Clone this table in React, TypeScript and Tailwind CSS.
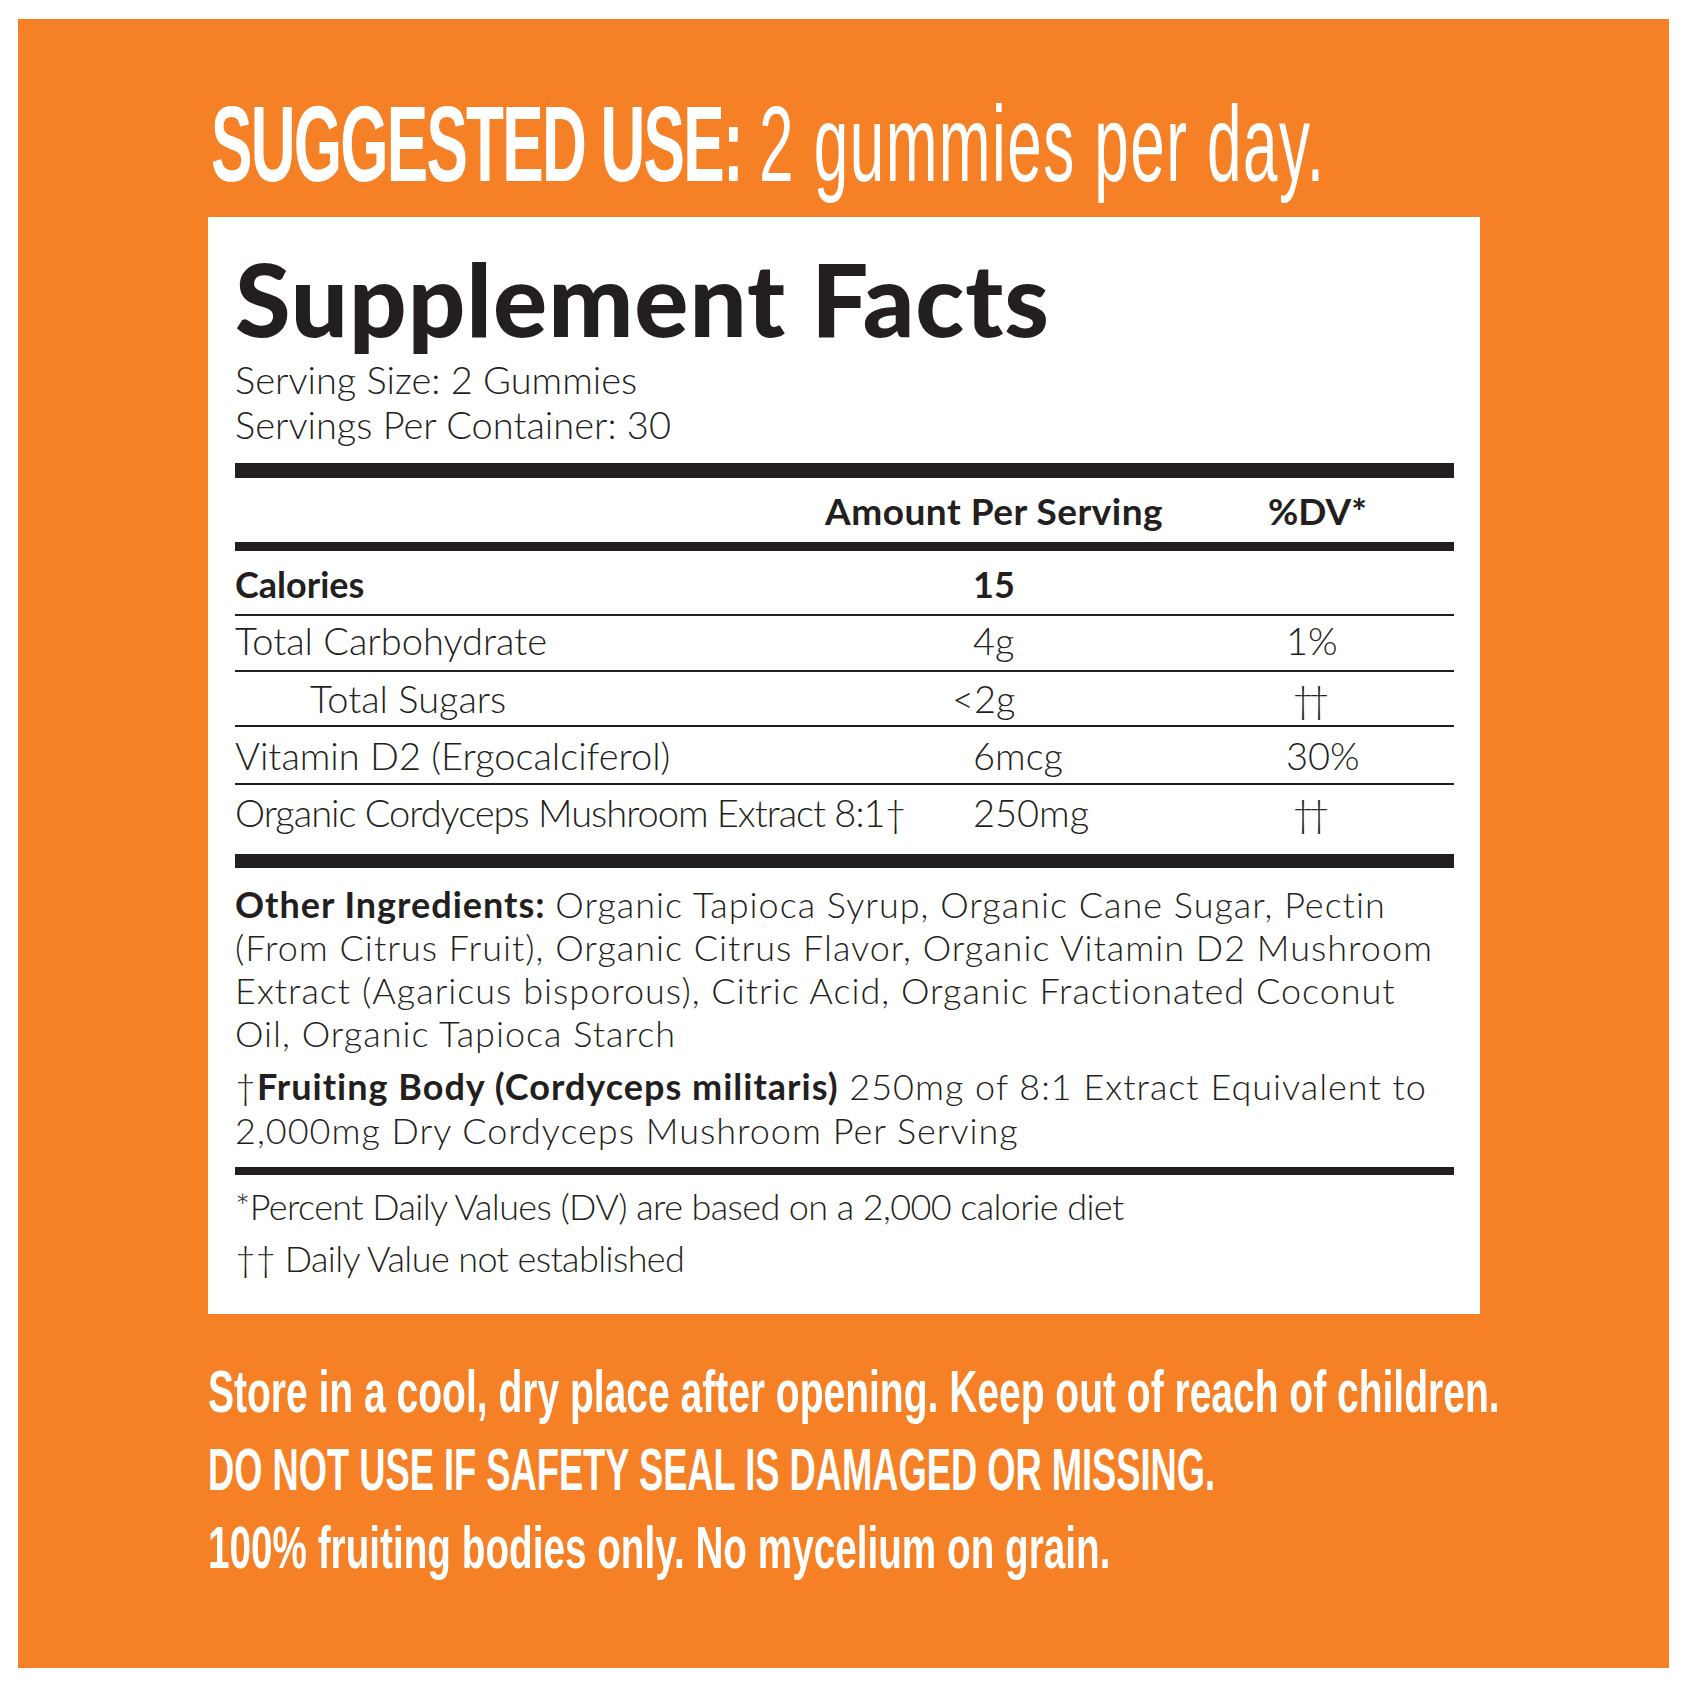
import React from 'react'

const ROWS = [
  { label: 'Total Carbohydrate', amount: '4g', dv: '1%', box: 'h-[54px] pt-[5px]', indent: false, shift: false, daggers: false, tight: false },
  { label: 'Total Sugars', amount: '<2g', dv: '††', box: 'h-[53px] pt-[7px]', indent: true, shift: true, daggers: true, tight: false },
  { label: 'Vitamin D2 (Ergocalciferol)', amount: '6mcg', dv: '30%', box: 'h-[56px] pt-[9px]', indent: false, shift: false, daggers: false, tight: false },
  { label: 'Organic Cordyceps Mushroom Extract 8:1†', amount: '250mg', dv: '††', box: 'h-[69px] pt-[8px]', indent: false, shift: false, daggers: true, tight: true },
]

const INGREDIENT_LINES = [
  'Organic Tapioca Syrup, Organic Cane Sugar, Pectin',
  '(From Citrus Fruit), Organic Citrus Flavor, Organic Vitamin D2 Mushroom',
  'Extract (Agaricus bisporous), Citric Acid, Organic Fractionated Coconut',
  'Oil, Organic Tapioca Starch',
]

function FactRow({ row, last }: { row: (typeof ROWS)[number]; last: boolean }) {
  return (
    <>
      <div className={`flex whitespace-nowrap text-[38px] leading-[38px] font-light ${row.box}`}>
        <div className={`w-[738px] ${row.indent ? 'pl-[75px]' : ''} ${row.tight ? 'tracking-[-1px]' : ''}`}>{row.label}</div>
        <div className="w-[313px]">
          <span className={row.shift ? '-ml-[21px]' : ''}>{row.amount}</span>
        </div>
        <div className={row.daggers ? 'pl-[6px] tracking-[-6px]' : ''}>{row.dv}</div>
      </div>
      {!last && <div className="h-[2px] bg-[#231f20]" />}
    </>
  )
}

export default function App() {
  return (
    <div className="w-[1688px] h-[1688px] bg-white overflow-hidden pt-[19px] pl-[18px]">
      <div className="w-[1651px] h-[1649px] bg-[#f58026] pt-[72px] pl-[190px] overflow-hidden">
        {/* headline */}
        <div className="ml-[3px] h-[107px] text-[107px] leading-[107px] text-white whitespace-nowrap origin-left scale-x-[0.58] font-['Liberation_Sans',Arial,sans-serif]">
          <span className="font-bold tracking-[-3px]">SUGGESTED USE:</span>{' '}
          <span className="tracking-[2.5px]">2 gummies per day.</span>
        </div>

        {/* facts panel */}
        <div className="mt-[19px] w-[1272px] h-[1097px] bg-white pt-[30px] pl-[27px] pr-[26px] text-[#231f20] font-['Lato',sans-serif]">
          <div className="h-[102px] text-[101px] leading-[102px] font-black tracking-[1px] whitespace-nowrap">
            Supplement Facts
          </div>
          <div className="mt-[8px] text-[38px] leading-[45px] font-light">
            <div>Serving Size: 2 Gummies</div>
            <div>Servings Per Container: 30</div>
          </div>

          <div className="mt-[16px] h-[15px] bg-[#231f20]" />
          <div className="flex pt-[14px] pb-[13px] text-[37px] leading-[37px] font-bold whitespace-nowrap">
            <div className="w-[590px]" />
            <div className="w-[443px] tracking-[0.5px]">Amount Per Serving</div>
            <div>%DV*</div>
          </div>
          <div className="h-[9px] bg-[#231f20]" />

          <div className="flex pt-[15px] pb-[12px] text-[36px] leading-[36px] font-bold">
            <div className="w-[738px]">Calories</div>
            <div>15</div>
          </div>
          <div className="h-[2px] bg-[#231f20]" />

          {ROWS.map((row, i) => (
            <FactRow key={row.label} row={row} last={i === ROWS.length - 1} />
          ))}
          <div className="h-[14px] bg-[#231f20]" />

          <div className="mt-[15px] text-[36px] leading-[43px] font-light whitespace-nowrap tracking-[1px]">
            {INGREDIENT_LINES.map((line, i) => (
              <div key={i}>
                {i === 0 && <span className="font-bold">Other Ingredients: </span>}
                {line}
              </div>
            ))}
          </div>
          <div className="mt-[9px] text-[36px] leading-[44px] font-light whitespace-nowrap tracking-[1px]">
            <div>
              †<span className="font-bold">Fruiting Body (Cordyceps militaris)</span> 250mg of 8:1 Extract Equivalent to
            </div>
            <div>2,000mg Dry Cordyceps Mushroom Per Serving</div>
          </div>
          <div className="mt-[15px] h-[8px] bg-[#231f20]" />

          <div className="mt-[5px] text-[36px] leading-[52px] font-light whitespace-nowrap tracking-[-0.6px]">
            <div>*Percent Daily Values (DV) are based on a 2,000 calorie diet</div>
            <div>†† Daily Value not established</div>
          </div>
        </div>

        {/* storage notes */}
        <div className="mt-[39px] text-[60px] leading-[78px] font-bold text-white whitespace-nowrap font-['Liberation_Sans',Arial,sans-serif]">
          <div className="origin-left scale-x-[0.65]">Store in a cool, dry place after opening. Keep out of reach of children.</div>
          <div className="origin-left scale-x-[0.605]">DO NOT USE IF SAFETY SEAL IS DAMAGED OR MISSING.</div>
          <div className="origin-left scale-x-[0.645]">100% fruiting bodies only. No mycelium on grain.</div>
        </div>
      </div>
    </div>
  )
}
